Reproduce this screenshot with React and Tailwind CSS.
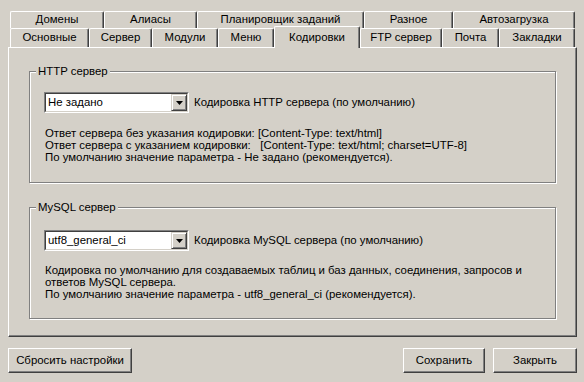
import React from 'react'

// ── Classic Win9x/2000 look ─────────────────────────────────────────────────

const ROW1 = [
  ['Домены', 94],
  ['Алиасы', 93],
  ['Планировщик заданий', 167],
  ['Разное', 89],
  ['Автозагрузка', 122],
]

const ROW2 = [
  ['Основные', 79],
  ['Сервер', 63],
  ['Модули', 66],
  ['Меню', 56],
  ['Кодировки', 86, true],
  ['FTP сервер', 82],
  ['Почта', 57],
  ['Закладки', 76],
]

function Tab({ label, width, active }) {
  if (active) {
    return (
      <div
        style={{ width }}
        className="relative z-10 -mb-[1px] h-[22px] flex items-start justify-center pt-[2px] bg-[#d4d0c8] border-l border-t border-white border-r border-r-[#404040] shadow-[inset_-1px_0_0_#808080] rounded-tl-[2px] rounded-tr-[2px]"
      >
        {label}
      </div>
    )
  }
  return (
    <div
      style={{ width }}
      className="h-full flex items-center justify-center bg-[#d4d0c8] border-l border-t border-white border-r border-r-[#404040] shadow-[inset_-1px_0_0_#808080] rounded-tl-[2px] rounded-tr-[2px]"
    >
      {label}
    </div>
  )
}

function Combo({ value }) {
  return (
    <div className="w-[145px] h-[21px] flex border border-t-[#808080] border-l-[#808080] border-b-white border-r-white">
      <div className="flex-1 flex border border-t-[#404040] border-l-[#404040] border-b-[#d4d0c8] border-r-[#d4d0c8] bg-white">
        <div className="flex-1 pl-[2px] leading-[17px]">{value}</div>
        <div className="w-[16px] h-[17px] flex items-center justify-center bg-[#d4d0c8] border border-t-[#d4d0c8] border-l-[#d4d0c8] border-r-[#404040] border-b-[#404040] shadow-[inset_1px_1px_0_white,inset_-1px_-1px_0_#808080]">
          <svg width="7" height="4" viewBox="0 0 7 4">
            <path d="M0 0h7L3.5 4z" fill="#000" />
          </svg>
        </div>
      </div>
    </div>
  )
}

function GroupBox({ title, top, children }) {
  return (
    <div
      style={{ marginTop: top }}
      className="relative ml-[20px] w-[527px] h-[112px] border border-[#808080] shadow-[inset_1px_1px_0_white,1px_1px_0_white]"
    >
      <div className="absolute -top-[8px] left-[6px] px-[2px] bg-[#d4d0c8] leading-[14px]">{title}</div>
      {children}
    </div>
  )
}

function Button({ children, width }) {
  return (
    <div
      style={{ width }}
      className="h-[25px] flex items-center justify-center bg-[#d4d0c8] border border-t-white border-l-white border-r-[#404040] border-b-[#404040] shadow-[inset_-1px_-1px_0_#808080]"
    >
      {children}
    </div>
  )
}

export default function App() {
  return (
    <div className="w-[584px] h-[382px] bg-[#d4d0c8] text-black text-[11.4px] font-['Liberation_Sans',Arial,sans-serif] overflow-hidden">
      <div className="pt-[11px] pl-[10px]">
        {/* Back row of tabs */}
        <div className="flex h-[17px]">
          {ROW1.map(([l, w]) => (
            <Tab key={l} label={l} width={w} />
          ))}
        </div>
        {/* Front row of tabs */}
        <div className="flex items-end h-[19px]">
          {ROW2.map(([l, w, a]) => (
            <Tab key={l} label={l} width={w} active={a} />
          ))}
        </div>
      </div>

      {/* Tab page */}
      <div className="ml-[8px] w-[569px] h-[290px] border border-t-white border-l-white border-r-[#404040] border-b-[#404040] shadow-[inset_-1px_-1px_0_#808080] flex flex-col">
        <GroupBox title="HTTP сервер" top={23}>
          <div className="mt-[20px] ml-[14px] flex items-center">
            <Combo value="Не задано" />
            <span className="ml-[5px]">Кодировка HTTP сервера (по умолчанию)</span>
          </div>
          <div className="mt-[14px] ml-[15px] leading-[12px]">
            <div>Ответ сервера без указания кодировки: [Content-Type: text/html]</div>
            <div>Ответ сервера с указанием кодировки:&nbsp;&nbsp; [Content-Type: text/html; charset=UTF-8]</div>
            <div>По умолчанию значение параметра - Не задано (рекомендуется).</div>
          </div>
        </GroupBox>

        <GroupBox title="MySQL сервер" top={24}>
          <div className="mt-[22px] ml-[14px] flex items-center">
            <Combo value="utf8_general_ci" />
            <span className="ml-[5px]">Кодировка MySQL сервера (по умолчанию)</span>
          </div>
          <div className="mt-[13px] ml-[15px] leading-[12px]">
            <div>Кодировка по умолчанию для создаваемых таблиц и баз данных, соединения, запросов и</div>
            <div>ответов MySQL сервера.</div>
            <div>По умолчанию значение параметра - utf8_general_ci (рекомендуется).</div>
          </div>
        </GroupBox>
      </div>

      {/* Bottom buttons */}
      <div className="mt-[11px] ml-[8px] w-[569px] flex">
        <Button width={124}>Сбросить настройки</Button>
        <div className="flex-1" />
        <Button width={82}>Сохранить</Button>
        <div className="w-[8px]" />
        <Button width={84}>Закрыть</Button>
      </div>
    </div>
  )
}
